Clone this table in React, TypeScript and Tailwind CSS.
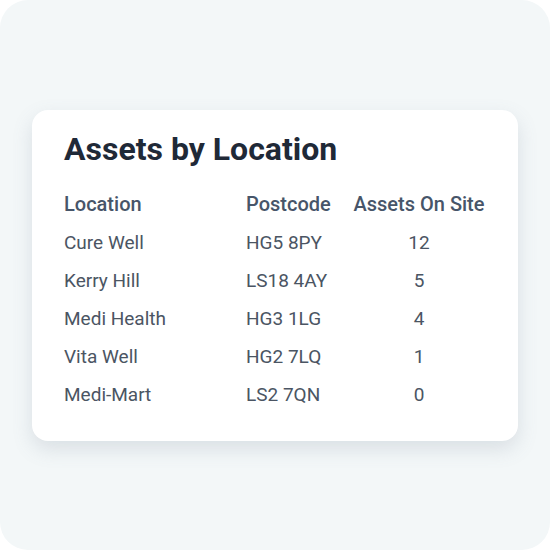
import React from 'react';

const rows = [
  { location: 'Cure Well', postcode: 'HG5 8PY', assets: 12 },
  { location: 'Kerry Hill', postcode: 'LS18 4AY', assets: 5 },
  { location: 'Medi Health', postcode: 'HG3 1LG', assets: 4 },
  { location: 'Vita Well', postcode: 'HG2 7LQ', assets: 1 },
  { location: 'Medi-Mart', postcode: 'LS2 7QN', assets: 0 },
];

const App = () => {
  return (
    <div className="w-[550px] h-[550px] bg-white font-['Roboto',sans-serif]">
      <div className="w-full h-full rounded-[28px] bg-[#f3f7f8] flex items-center justify-center">
        <div className="w-[486px] bg-white rounded-2xl shadow-[0_8px_20px_rgba(100,116,139,0.18)] pl-8 pr-[33px] pt-[20px] pb-[26px]">
          <h2 className="text-[32px] leading-[38px] font-bold text-[#1f2937] mb-[16px]">
            Assets by Location
          </h2>

          <div className="grid grid-cols-[182px_107px_1fr] text-[19px]">
            <div className="h-[41px] flex items-center text-[20px] font-medium text-[#475569]">Location</div>
            <div className="h-[41px] flex items-center text-[20px] font-medium text-[#475569]">Postcode</div>
            <div className="h-[41px] flex items-center justify-center text-[20px] font-medium text-[#475569]">Assets On Site</div>

            {rows.map((row) => (
              <React.Fragment key={row.location}>
                <div className="h-[38px] flex items-center text-[#4b5563]">{row.location}</div>
                <div className="h-[38px] flex items-center text-[#4b5563]">{row.postcode}</div>
                <div className="h-[38px] flex items-center justify-center text-[#4b5563]">{row.assets}</div>
              </React.Fragment>
            ))}
          </div>
        </div>
      </div>
    </div>
  );
};

export default App;
